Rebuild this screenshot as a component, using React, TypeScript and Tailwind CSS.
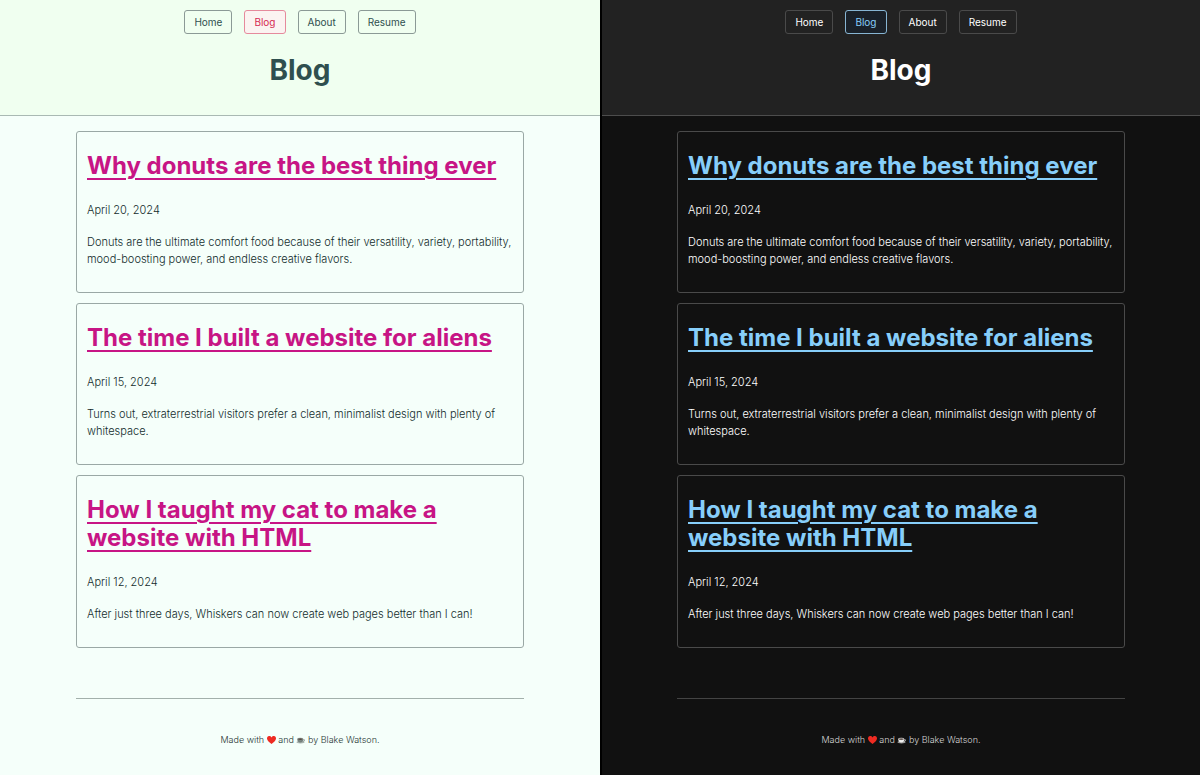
import React from "react";

type Theme = {
  name: string;
  page: string;
  header: string;
  link: string;
  active: string;
  card: string;
  title: string;
  body: string;
  rule: string;
  footer: string;
};

const light: Theme = {
  name: "light",
  page: "bg-[#f5fffa] text-[#2f4f4f]",
  header: "bg-[#f0fff0] border-[#a9b9b3]",
  link: "border-[#8b9a96] text-[#2f4f4f]",
  active: "border-[#e58a9c] bg-[#fbf3f1] text-[#d62a52]",
  card: "border-[#9aa8a5]",
  title: "text-[#c71585]",
  body: "text-[#122c2c]",
  rule: "border-[#a3b0ab]",
  footer: "text-[#263634]",
};

const dark: Theme = {
  name: "dark",
  page: "bg-[#111111] text-white border-l-2 border-black",
  header: "bg-[#222222] border-[#4d4d4d]",
  link: "border-[#4a4a4a] text-white",
  active: "border-[#87b5d3] bg-[#1a2129] text-[#87cefa]",
  card: "border-[#4a4a4a]",
  title: "text-[#87cefa]",
  body: "text-white",
  rule: "border-[#444444]",
  footer: "text-[#d4d4d4]",
};

const links = ["Home", "Blog", "About", "Resume"];

const posts = [
  {
    title: "Why donuts are the best thing ever",
    date: "April 20, 2024",
    iso: "2024-04-20",
    text: "Donuts are the ultimate comfort food because of their versatility, variety, portability, mood-boosting power, and endless creative flavors.",
  },
  {
    title: "The time I built a website for aliens",
    date: "April 15, 2024",
    iso: "2024-04-15",
    text: "Turns out, extraterrestrial visitors prefer a clean, minimalist design with plenty of whitespace.",
  },
  {
    title: "How I taught my cat to make a website with HTML",
    date: "April 12, 2024",
    iso: "2024-04-12",
    text: "After just three days, Whiskers can now create web pages better than I can!",
  },
];

function Heart() {
  return (
    <svg viewBox="0 0 18 16" className="inline-block h-2 w-[9px] align-[-1px]" role="img" aria-label="love">
      <path d="M9 16C5 13 0 9.500 0 5A4.700 4.700 0 0 1 9 2.800A4.700 4.700 0 0 1 18 5C18 9.500 13 13 9 16Z" fill="#ee2b22" />
    </svg>
  );
}

function Coffee({ isDark }: { isDark: boolean }) {
  return (
    <svg viewBox="0 0 18 16" className="inline-block h-2 w-[9px] align-[-1px]" role="img" aria-label="coffee">
      <ellipse cx="9" cy="12.500" rx="8" ry="2.300" fill={isDark ? "#9a9a9a" : "#a8b3ae"} />
      <path d="M2.500 6H14.500C14.500 10 12.500 13 8.500 13S2.500 10 2.500 6Z" fill={isDark ? "#eeeeee" : "#75817d"} />
      <path d="M14 7.500H17V9.500L13.500 11" fill="none" stroke={isDark ? "#dddddd" : "#75817d"} strokeWidth="1.300" />
      <ellipse cx="8.500" cy="6" rx="6.300" ry="2.300" fill={isDark ? "#c9c9c9" : "#98a39e"} />
      <ellipse cx="8.500" cy="6.200" rx="5" ry="1.400" fill="#3e2b22" />
    </svg>
  );
}

function BlogPage({ theme }: { theme: Theme }) {
  return (
    <section className={`w-1/2 font-light ${theme.page}`} aria-label={`Blog, ${theme.name} theme`}>
      <header className={`border-b px-5 pt-2.5 pb-7 text-center ${theme.header}`}>
        <nav className="flex flex-wrap justify-center gap-3 text-[10px] leading-[22px] font-normal">
          {links.map((label) => (
            <a
              key={label}
              href={`#${label.toLowerCase()}`}
              aria-current={label === "Blog" ? "page" : undefined}
              className={`rounded-[3px] border px-[9px] ${label === "Blog" ? theme.active : theme.link}`}
            >
              {label}
            </a>
          ))}
        </nav>
        <h1 className="mt-5 text-[28px] leading-[33px] font-bold">Blog</h1>
      </header>
      <div className="mx-auto max-w-md">
        <main className={`flex flex-col gap-2.5 pt-[15px] ${theme.body}`}>
          {posts.map((post) => (
            <article key={post.iso} className={`rounded-[3px] border px-2.5 pt-5 pb-6 ${theme.card}`}>
              <h2 className="text-[24px] leading-7 font-bold">
                <a href={`#${post.iso}`} className={`underline decoration-2 underline-offset-4 ${theme.title}`}>
                  {post.title}
                </a>
              </h2>
              <p className="mt-[22px] text-[11px] leading-[17px]">
                <time dateTime={post.iso}>{post.date}</time>
              </p>
              <p className="mt-[15px] text-[11px] leading-[17px]">{post.text}</p>
            </article>
          ))}
        </main>
        <footer className={`mt-[50px] border-t pt-[33px] pb-6 text-center text-[9px] leading-4 ${theme.rule} ${theme.footer}`}>
          <p>
            Made with <Heart /> and <Coffee isDark={theme.name === "dark"} /> by Blake Watson.
          </p>
        </footer>
      </div>
    </section>
  );
}

export default function App() {
  return (
    <div className="flex min-h-screen font-[Inter,sans-serif]">
      <BlogPage theme={light} />
      <BlogPage theme={dark} />
    </div>
  );
}
